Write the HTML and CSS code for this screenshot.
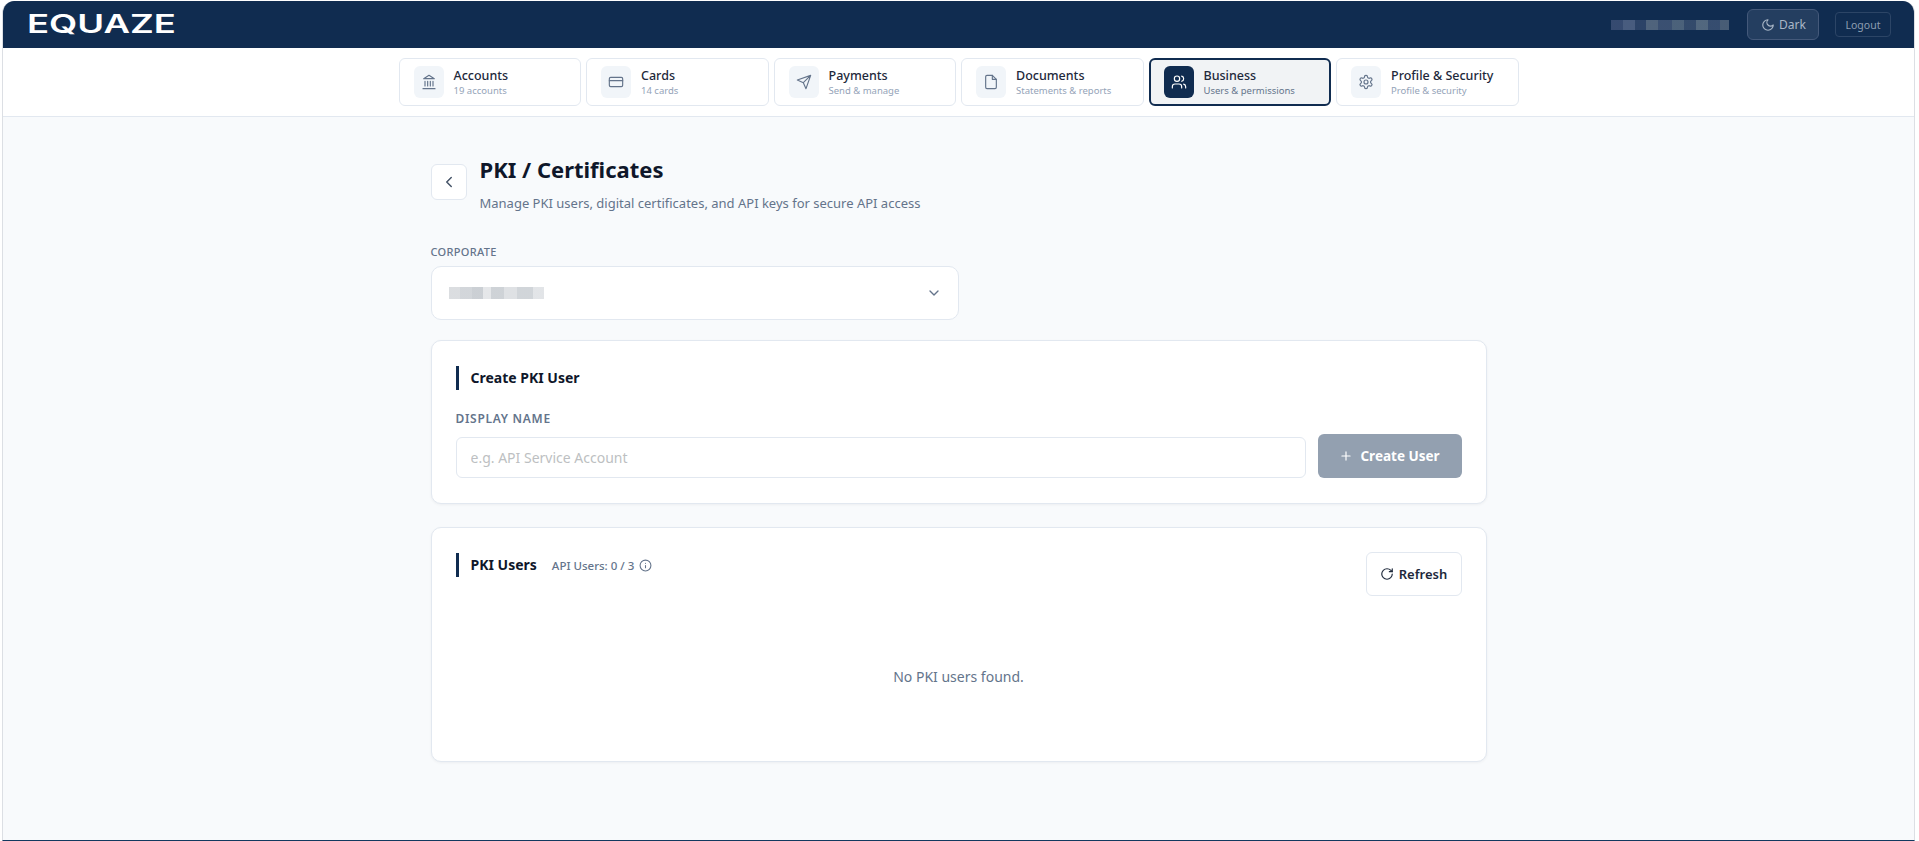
FILE: index.html
```html
<!DOCTYPE html>
<html lang="en">

<head>
    <meta charset="UTF-8">
    <meta name="viewport" content="width=device-width, initial-scale=1.0">
    <title>PKI / Certificates</title>
    <link rel="stylesheet" href="styles.css">
</head>

<body>
    <div class="app">
        <header class="topbar">
            <span class="logo"><span class="logo-text">EQUAZE</span></span>
            <div class="topbar-right">
                <span class="email-blur"></span>
                <button class="theme-btn">
                    <svg class="icon" width="14" height="14" viewBox="0 0 24 24"><path d="M12 3a6 6 0 0 0 9 9 9 9 0 1 1-9-9Z"/></svg>
                    Dark
                </button>
                <button class="logout-btn">Logout</button>
            </div>
        </header>

        <nav class="tabs">
            <div class="tabs-inner">
                <a class="tab">
                    <span class="tab-icon">
                        <svg class="icon" width="16" height="16" viewBox="0 0 24 24"><path d="M3 22h18M6 18v-7M10 18v-7M14 18v-7M18 18v-7M12 2l8 5H4Z"/></svg>
                    </span>
                    <span class="tab-text"><b>Accounts</b><small>19 accounts</small></span>
                </a>
                <a class="tab">
                    <span class="tab-icon">
                        <svg class="icon" width="16" height="16" viewBox="0 0 24 24"><rect x="2" y="5" width="20" height="14" rx="2"/><path d="M2 10h20"/></svg>
                    </span>
                    <span class="tab-text"><b>Cards</b><small>14 cards</small></span>
                </a>
                <a class="tab">
                    <span class="tab-icon">
                        <svg class="icon" width="16" height="16" viewBox="0 0 24 24"><path d="M22 2 11 13M22 2l-7 20-4-9-9-4Z"/></svg>
                    </span>
                    <span class="tab-text"><b>Payments</b><small>Send &amp; manage</small></span>
                </a>
                <a class="tab">
                    <span class="tab-icon">
                        <svg class="icon" width="16" height="16" viewBox="0 0 24 24"><path d="M14 2H6a2 2 0 0 0-2 2v16a2 2 0 0 0 2 2h12a2 2 0 0 0 2-2V8Z"/><path d="M14 2v6h6"/></svg>
                    </span>
                    <span class="tab-text"><b>Documents</b><small>Statements &amp; reports</small></span>
                </a>
                <a class="tab active">
                    <span class="tab-icon">
                        <svg class="icon" width="16" height="16" viewBox="0 0 24 24"><path d="M16 21v-2a4 4 0 0 0-4-4H6a4 4 0 0 0-4 4v2"/><circle cx="9" cy="7" r="4"/><path d="M22 21v-2a4 4 0 0 0-3-3.87M16 3.13a4 4 0 0 1 0 7.75"/></svg>
                    </span>
                    <span class="tab-text"><b>Business</b><small>Users &amp; permissions</small></span>
                </a>
                <a class="tab">
                    <span class="tab-icon">
                        <svg class="icon" width="16" height="16" viewBox="0 0 24 24"><path d="M12.22 2h-.44a2 2 0 0 0-2 2v.18a2 2 0 0 1-1 1.73l-.43.25a2 2 0 0 1-2 0l-.15-.08a2 2 0 0 0-2.73.73l-.22.38a2 2 0 0 0 .73 2.73l.15.1a2 2 0 0 1 1 1.72v.51a2 2 0 0 1-1 1.74l-.15.09a2 2 0 0 0-.73 2.73l.22.38a2 2 0 0 0 2.73.73l.15-.08a2 2 0 0 1 2 0l.43.25a2 2 0 0 1 1 1.73V20a2 2 0 0 0 2 2h.44a2 2 0 0 0 2-2v-.18a2 2 0 0 1 1-1.73l.43-.25a2 2 0 0 1 2 0l.15.08a2 2 0 0 0 2.73-.73l.22-.39a2 2 0 0 0-.73-2.73l-.15-.08a2 2 0 0 1-1-1.74v-.5a2 2 0 0 1 1-1.74l.15-.09a2 2 0 0 0 .73-2.73l-.22-.38a2 2 0 0 0-2.73-.73l-.15.08a2 2 0 0 1-2 0l-.43-.25a2 2 0 0 1-1-1.73V4a2 2 0 0 0-2-2Z"/><circle cx="12" cy="12" r="3"/></svg>
                    </span>
                    <span class="tab-text"><b>Profile &amp; Security</b><small>Profile &amp; security</small></span>
                </a>
            </div>
        </nav>

        <main class="content">
            <div class="page-head">
                <button class="back-btn">
                    <svg class="icon" width="18" height="18" viewBox="0 0 24 24"><path d="m15 18-6-6 6-6"/></svg>
                </button>
                <div class="page-title">
                    <h1>PKI / Certificates</h1>
                    <p class="subtitle">Manage PKI users, digital certificates, and API keys for secure API access</p>
                </div>
            </div>

            <div class="corporate">
                <label class="corporate-label">CORPORATE</label>
                <div class="select">
                    <span class="select-blur"></span>
                    <svg class="icon" width="16" height="16" viewBox="0 0 24 24"><path d="m6 9 6 6 6-6"/></svg>
                </div>
            </div>

            <section class="card create-card">
                <h2 class="card-title">Create PKI User</h2>
                <label class="field-label">DISPLAY NAME</label>
                <div class="create-row">
                    <input class="text-input" type="text" placeholder="e.g. API Service Account">
                    <button class="create-btn">
                        <svg class="icon" width="14" height="14" viewBox="0 0 24 24"><path d="M5 12h14M12 5v14"/></svg>
                        Create User
                    </button>
                </div>
            </section>

            <section class="card users-card">
                <div class="users-head">
                    <div class="users-title">
                        <h2 class="card-title">PKI Users</h2>
                        <span class="quota">API Users: 0 / 3</span>
                        <svg class="icon" width="13" height="13" viewBox="0 0 24 24"><circle cx="12" cy="12" r="10"/><path d="M12 16v-4M12 8h.01"/></svg>
                    </div>
                    <button class="refresh-btn">
                        <svg class="icon" width="14" height="14" viewBox="0 0 24 24"><path d="M21 12a9 9 0 1 1-9-9c2.52 0 4.93 1 6.74 2.74L21 8"/><path d="M21 3v5h-5"/></svg>
                        Refresh
                    </button>
                </div>
                <p class="empty">No PKI users found.</p>
            </section>
        </main>
    </div>
</body>

</html>
```

FILE: styles.css
```css
/* General */
* {
    box-sizing: border-box;
}

html,
body {
    height: 100%;
}

body {
    margin: 0;
    font-family: 'Noto Sans', 'Liberation Sans', sans-serif;
    background-color: #ffffff;
    color: #0f172a;
    overflow: hidden;
}

.icon {
    fill: none;
    stroke: currentColor;
    stroke-width: 2;
    stroke-linecap: round;
    stroke-linejoin: round;
    flex-shrink: 0;
}

button {
    font-family: inherit;
}

.app {
    height: 840px;
    margin: 1px 4px 0 2px;
    border-left: 1px solid #dcdfe4;
    border-right: 1px solid #dcdfe4;
    border-bottom: 1px solid #12395f;
    border-radius: 12px 12px 0 0;
    background-color: #f8fafc;
    overflow: hidden;
}

/* Top bar */
.topbar {
    height: 47px;
    background-color: #102c50;
    display: flex;
    align-items: center;
    justify-content: space-between;
    padding: 0 23px 0 24px;
}

.logo {
    display: block;
    width: 148px;
    height: 20px;
    margin-top: -1px;
}

.logo-text {
    display: block;
    font-family: 'Inter', sans-serif;
    font-size: 25px;
    line-height: 20px;
    font-weight: 600;
    color: #ffffff;
    transform: scaleX(1.46);
    transform-origin: left center;
}

.topbar-right {
    display: flex;
    align-items: center;
}

.email-blur {
    display: block;
    width: 118px;
    height: 10px;
    margin-right: 18px;
    opacity: 0.8;
    background: linear-gradient(90deg, #3f5278 0 10%, #56688a 10% 20%, #33496d 20% 30%, #5f7187 30% 40%, #45597a 40% 52%, #5a6f85 52% 62%, #3c5272 62% 72%, #62768a 72% 82%, #3f5577 82% 92%, #56697f 92% 100%);
}

.theme-btn {
    display: flex;
    align-items: center;
    gap: 4px;
    width: 72px;
    height: 31px;
    padding: 0 0 0 13px;
    font-size: 12px;
    color: #a9b6c6;
    background-color: #243e60;
    border: 1px solid #44597a;
    border-radius: 6px;
}

.logout-btn {
    width: 56px;
    height: 25px;
    margin-left: 16px;
    padding: 0;
    font-size: 10.5px;
    color: #8d9db1;
    background-color: transparent;
    border: 1px solid #2c4566;
    border-radius: 4px;
}

/* Tabs */
.tabs {
    height: 69px;
    background-color: #ffffff;
    border-bottom: 1px solid #e2e8f0;
    padding-top: 10px;
}

.tabs-inner {
    width: 1120px;
    margin: 0 auto;
    display: grid;
    grid-template-columns: repeat(6, 1fr);
    gap: 5px;
}

.tab {
    height: 48px;
    display: flex;
    align-items: center;
    gap: 10px;
    padding: 0 14px;
    background-color: #ffffff;
    border: 1px solid #e2e8f0;
    border-radius: 6px;
}

.tab.active {
    background-color: #f1f3f5;
    border: 2px solid #102c50;
    padding: 0 13px;
}

.tab-icon {
    width: 30px;
    height: 32px;
    display: flex;
    align-items: center;
    justify-content: center;
    background-color: #f1f5f9;
    border-radius: 6px;
    color: #64748b;
}

.tab-icon .icon {
    stroke-width: 1.75;
}

.tab.active .tab-icon {
    background-color: #102c50;
    color: #ffffff;
}

.tab-text {
    display: flex;
    flex-direction: column;
    line-height: 1;
}

.tab-text b {
    font-size: 12.5px;
    font-weight: 500;
    line-height: 17px;
    color: #1e293b;
}

.tab-text small {
    font-size: 9.5px;
    line-height: 14px;
    color: #94a3b8;
}

.tab.active .tab-text small {
    color: #64748b;
}

/* Page */
.content {
    width: 1056px;
    margin: 0 auto;
    padding-top: 47px;
}

.page-head {
    display: flex;
    align-items: flex-start;
    gap: 13px;
}

.back-btn {
    width: 36px;
    height: 36px;
    padding: 0;
    display: flex;
    align-items: center;
    justify-content: center;
    color: #475569;
    background-color: #ffffff;
    border: 1px solid #e2e8f0;
    border-radius: 6px;
}

.page-title {
    margin-top: -8px;
}

h1 {
    margin: 0;
    font-size: 22px;
    line-height: 26px;
    font-weight: 700;
    color: #0f172a;
}

.subtitle {
    margin: 12px 0 0;
    font-size: 13px;
    line-height: 18px;
    color: #64748b;
}

.corporate {
    width: 528px;
    margin-top: 33px;
}

.corporate-label {
    display: block;
    font-size: 11px;
    line-height: 14px;
    font-weight: 500;
    letter-spacing: 0.3px;
    color: #64748b;
    margin-bottom: 7px;
}

.select {
    height: 54px;
    display: flex;
    align-items: center;
    justify-content: space-between;
    padding: 0 16px 0 17px;
    background-color: #ffffff;
    border: 1px solid #e2e8f0;
    border-radius: 10px;
    color: #64748b;
}

.select-blur {
    display: block;
    width: 95px;
    height: 12px;
    opacity: 0.6;
    background: linear-gradient(90deg, #c3c7cc 0 12%, #b5bbc2 12% 24%, #a9b0b8 24% 36%, #d4d7db 36% 44%, #aeb5bc 44% 58%, #c9cdd2 58% 72%, #b2b9c0 72% 88%, #cfd3d8 88% 100%);
}

/* Cards */
.card {
    background-color: #ffffff;
    border: 1px solid #e2e8f0;
    border-radius: 10px;
    box-shadow: 0 1px 3px rgba(15, 23, 42, 0.05);
    padding: 24px;
}

.create-card {
    height: 164px;
    margin-top: 20px;
    padding-top: 25px;
}

.users-card {
    height: 235px;
    margin-top: 23px;
}

.card-title {
    margin: 0;
    padding-left: 12px;
    font-size: 14px;
    line-height: 24px;
    font-weight: 700;
    color: #0f172a;
    border-left: 3px solid #102c50;
}

.field-label {
    display: block;
    margin-top: 22px;
    font-size: 12px;
    line-height: 14px;
    font-weight: 600;
    letter-spacing: 0.7px;
    color: #64748b;
}

.create-row {
    display: flex;
    align-items: flex-end;
    gap: 12px;
    margin-top: 8px;
}

.text-input {
    flex: 1;
    height: 41px;
    padding: 0 14px;
    font-family: inherit;
    font-size: 14px;
    background-color: #ffffff;
    border: 1px solid #e2e8f0;
    border-radius: 6px;
}

.text-input::placeholder {
    color: #bdbfc2;
}

.create-btn {
    width: 144px;
    height: 44px;
    display: flex;
    align-items: center;
    justify-content: center;
    gap: 7px;
    font-size: 13.5px;
    font-weight: 700;
    color: #ffffff;
    background-color: #93a0b0;
    border: none;
    border-radius: 6px;
}

.users-head {
    display: flex;
    align-items: flex-start;
    justify-content: space-between;
}

.users-title {
    display: flex;
    align-items: center;
    margin-top: 1px;
    color: #64748b;
}

.quota {
    margin: 0 5px 0 15px;
    font-size: 11.5px;
    font-weight: 500;
    color: #64748b;
}

.refresh-btn {
    width: 96px;
    height: 44px;
    display: flex;
    align-items: center;
    justify-content: center;
    gap: 5px;
    font-size: 13px;
    font-weight: 600;
    color: #1e293b;
    background-color: #ffffff;
    border: 1px solid #e2e8f0;
    border-radius: 6px;
}

.empty {
    margin: 71px 0 0;
    text-align: center;
    font-size: 14px;
    line-height: 20px;
    color: #64748b;
}
```
